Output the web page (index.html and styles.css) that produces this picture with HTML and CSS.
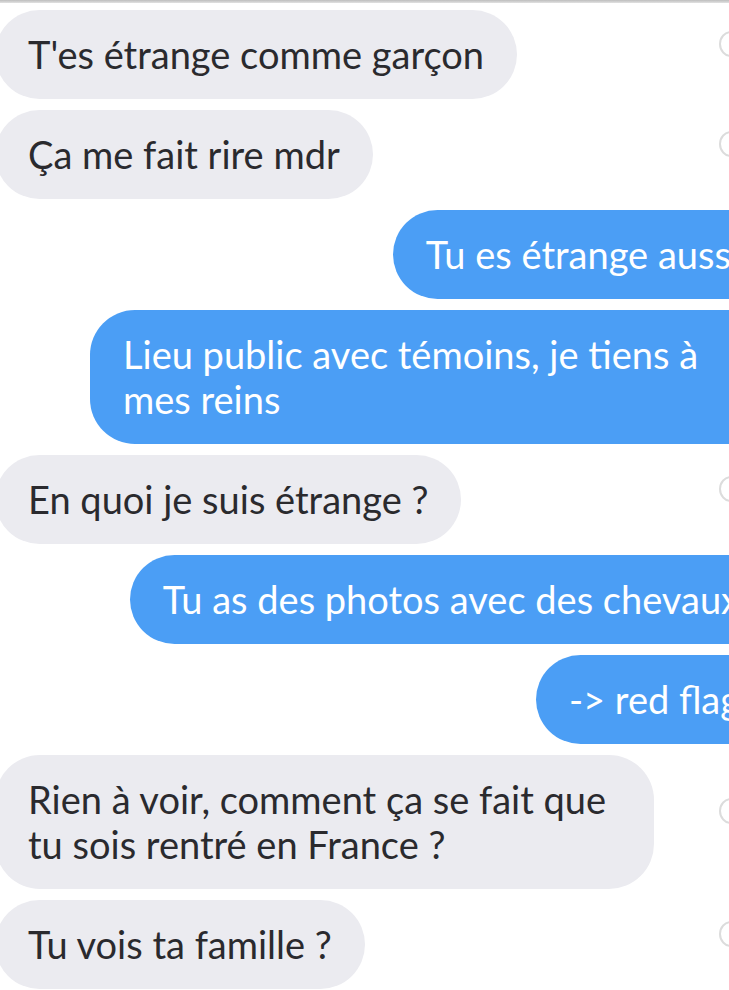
FILE: index.html
```html
<!DOCTYPE html>
<html lang="fr">
<head>
<meta charset="utf-8">
<link rel="stylesheet" href="styles.css">
</head>
<body>
<div class="topline"></div>
<main class="chat">
  <div class="row recv">
    <div class="bubble in">T'es étrange comme garçon</div>
    <span class="like"></span>
  </div>
  <div class="row recv">
    <div class="bubble in">Ça me fait rire mdr</div>
    <span class="like"></span>
  </div>
  <div class="row sent">
    <div class="bubble out">Tu es étrange aussi</div>
  </div>
  <div class="row sent">
    <div class="bubble out">Lieu public avec témoins, je tiens à mes reins</div>
  </div>
  <div class="row recv">
    <div class="bubble in">En quoi je suis étrange ?</div>
    <span class="like"></span>
  </div>
  <div class="row sent">
    <div class="bubble out">Tu as des photos avec des chevaux</div>
  </div>
  <div class="row sent">
    <div class="bubble out">-&gt; red flag</div>
  </div>
  <div class="row recv">
    <div class="bubble in">Rien à voir, comment ça se fait que tu sois rentré en France ?</div>
    <span class="like"></span>
  </div>
  <div class="row recv">
    <div class="bubble in">Tu vois ta famille ?</div>
    <span class="like"></span>
  </div>
</main>
</body>
</html>
```
FILE: styles.css
```css
html, body {
  margin: 0;
  padding: 0;
  background: #ffffff;
}
body {
  width: 729px;
  height: 990px;
  overflow: hidden;
  font-family: "Lato", "Open Sans", sans-serif;
}
.topline {
  height: 3px;
  background: linear-gradient(#bdbdbd, #e2e2e2);
}
.chat {
  display: flex;
  flex-direction: column;
  gap: 11px;
  padding-top: 7px;
}
.row {
  display: flex;
  align-items: center;
}
.recv {
  justify-content: space-between;
  margin-left: -5px;
  margin-right: -14px;
}
.sent {
  justify-content: flex-end;
  margin-right: -44px;
}
.bubble {
  box-sizing: border-box;
  padding: 22px 33px;
  font-size: 38px;
  line-height: 45px;
  border-radius: 45px;
}
.in {
  background: #ebebf0;
  color: #2a2a2e;
  max-width: 659px;
}
.out {
  background: #4b9ef5;
  color: #ffffff;
  max-width: 683px;
}
.like {
  flex: none;
  width: 20px;
  height: 22px;
  border: 2px solid #dcdcdc;
  border-radius: 50%;
  margin-top: -22px;
}
```
